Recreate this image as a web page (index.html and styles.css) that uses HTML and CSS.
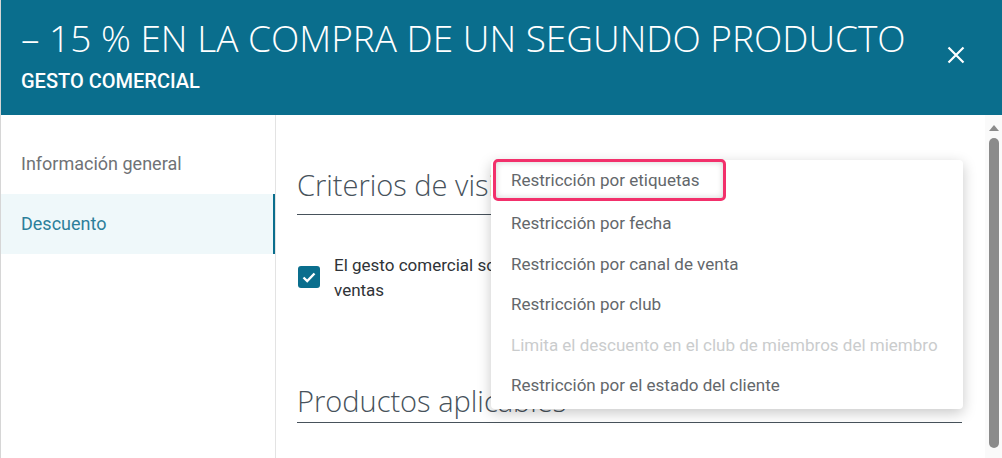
FILE: index.html
```html
<!doctype html>
<html>
<head>
<meta charset="utf-8">
<title>Gesto comercial</title>
<link rel="stylesheet" href="styles.css">
</head>
<body>
<div class="dialog">
    <div class="head">
        <div class="head-text">
            <h1 class="title">– 15 % EN LA COMPRA DE UN SEGUNDO PRODUCTO</h1>
            <div class="subtitle">GESTO COMERCIAL</div>
        </div>
        <a class="close" href="javascript:;">
            <svg width="18" height="18" viewBox="0 0 18 18"><path d="M1.5 1.5L16.5 16.5M16.5 1.5L1.5 16.5" stroke="#fff" stroke-width="2.2" fill="none"/></svg>
        </a>
    </div>
    <div class="body">
        <ul class="side">
            <li>Información general</li>
            <li class="on">Descuento</li>
        </ul>
        <div class="main">
            <div class="content">
                <h2 class="sec">Criterios de visibilidad</h2>
                <label class="check">
                    <span class="box">
                        <svg width="14" height="11" viewBox="0 0 14 11"><path d="M1.5 5.5L5.2 9L12.5 1.5" stroke="#fff" stroke-width="2.4" fill="none"/></svg>
                    </span>
                    <span class="check-text">El gesto comercial solo se aplica a pedidos en determinados canales de<br>ventas</span>
                </label>
                <h2 class="sec sec2">Productos aplicables</h2>

                <!-- menú de restricciones -->
                <ul class="menu">
                    <li class="picked">Restricción por etiquetas</li>
                    <li>Restricción por fecha</li>
                    <li>Restricción por canal de venta</li>
                    <li>Restricción por club</li>
                    <li class="off">Limita el descuento en el club de miembros del miembro</li>
                    <li>Restricción por el estado del cliente</li>
                </ul>
            </div>
            <div class="scroll">
                <span class="arrow"></span>
                <span class="thumb"></span>
            </div>
        </div>
    </div>
</div>
</body>
</html>
```

FILE: styles.css
```css
html,body{
    margin:0px;
    padding:0px;
    background:#fff;
    }
ul{
    margin:0px;
    padding:0px;
    }
li{
    list-style:none;
    }
a{
    text-decoration:none;
    }
.dialog{
    height:458px;
    overflow:hidden;
    border-left:1px solid #d6d6d6;
    font-family:Roboto,"Liberation Sans",sans-serif;
    }
.head{
    height:115px;
    background:#0a6e8d;
    color:#fff;
    display:flex;
    align-items:flex-start;
    justify-content:space-between;
    }
.head-text{
    padding:16px 0 0 20px;
    }
.title{
    margin:0px;
    font-family:"Open Sans",sans-serif;
    font-weight:300;
    font-size:37px;
    line-height:44px;
    white-space:nowrap;
    }
.subtitle{
    margin-top:9px;
    font-size:20px;
    font-weight:500;
    line-height:24px;
    }
.close{
    display:block;
    margin:46px 37px 0 0;
    width:18px;
    height:18px;
    }
.close svg{
    display:block;
    }
.body{
    display:flex;
    height:343px;
    }
.side{
    width:274px;
    flex:none;
    border-right:1px solid #e3e3e3;
    padding-top:19px;
    }
.side li{
    height:60px;
    line-height:60px;
    padding-left:20px;
    font-size:18px;
    color:#6f7276;
    }
.side li.on{
    background:#eff8fa;
    color:#2c7f9a;
    border-right:2px solid #0a6e8d;
    }
.main{
    flex:1;
    display:flex;
    }
.content{
    flex:1;
    position:relative;
    padding:50px 23px 0 21px;
    }
.sec{
    margin:0px;
    font-family:"Open Sans",sans-serif;
    font-weight:300;
    font-size:29px;
    line-height:40px;
    color:#47525b;
    border-bottom:1px solid #47525b;
    padding-bottom:9px;
    white-space:nowrap;
    }
.sec2{
    margin-top:78px;
    padding-bottom:1px;
    }
.check{
    display:flex;
    align-items:flex-start;
    gap:14px;
    margin-top:38px;
    }
.box{
    width:22px;
    height:22px;
    flex:none;
    margin-top:13px;
    margin-left:1px;
    border-radius:3px;
    background:#0a6e8d;
    display:flex;
    align-items:center;
    justify-content:center;
    }
.check-text{
    font-size:17px;
    line-height:25px;
    color:#2f3337;
    white-space:nowrap;
    }
.menu{
    position:absolute;
    left:215px;
    top:45px;
    width:472px;
    padding:2px 0 3px;
    background:#fff;
    border-radius:4px;
    box-shadow:0 4px 14px rgba(0,0,0,0.22);
    }
.menu li{
    height:40.5px;
    line-height:40px;
    padding-left:20px;
    font-size:17px;
    color:#63676b;
    white-space:nowrap;
    }
.menu li.off{
    color:#cacccd;
    }
.menu li.picked{
    width:212px;
    margin-left:2px;
    padding-left:15px;
    height:36px;
    line-height:36px;
    border:3px solid #f2306b;
    border-radius:5px;
    box-shadow:0 0 6px rgba(0,0,0,0.18) inset;
    margin-top:-3px;
    margin-bottom:2px;
    }
.scroll{
    width:17px;
    flex:none;
    background:#fafafa;
    display:flex;
    flex-direction:column;
    align-items:center;
    padding-top:10px;
    }
.arrow{
    width:0px;
    height:0px;
    border-left:5px solid transparent;
    border-right:5px solid transparent;
    border-bottom:6px solid #8b8b8b;
    }
.thumb{
    display:block;
    width:10px;
    height:310px;
    margin-top:7px;
    border-radius:5px;
    background:#8b8b8b;
    }
```
